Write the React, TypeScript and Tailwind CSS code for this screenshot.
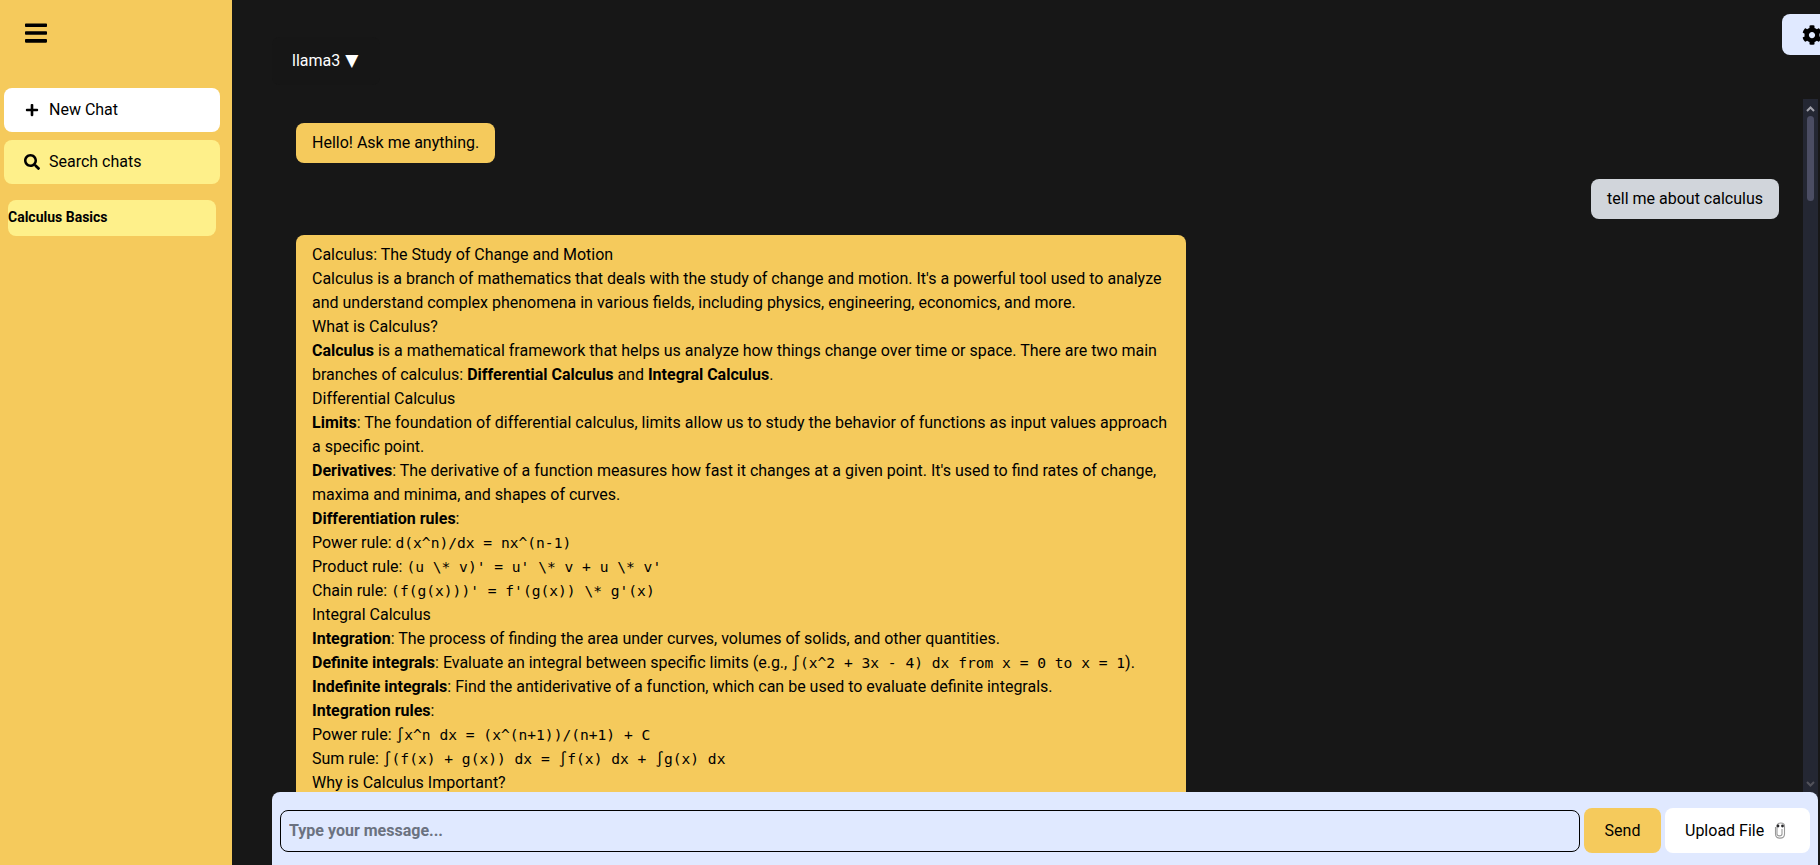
import React from 'react';
import { FaBars, FaCog, FaPlus, FaSearch } from 'react-icons/fa';

const Code = ({ children }: { children: React.ReactNode }) => (
  <code className="font-['DejaVu_Sans_Mono',monospace] text-[14.6px]">{children}</code>
);

const Clip = () => (
  <svg width="12" height="17" viewBox="0 0 12 17" fill="none" className="ml-[10px]">
    <path d="M1.500 5v7c0 5.500 9 5.500 9 0V4C10.500 0 3 0 3 4v8c0 2.500 5 2.500 5 0V7" stroke="#9a9a9a" strokeWidth="1.100" />
    <circle cx="4" cy="4" r="1.400" fill="#27272a" />
    <circle cx="8.500" cy="4" r="1.400" fill="#27272a" />
  </svg>
);

const App: React.FC = () => {
  return (
    <div className="flex h-screen overflow-hidden bg-[#171717] font-['Roboto',sans-serif] text-base text-black">
      {/* Sidebar */}
      <aside className="flex w-[232px] shrink-0 flex-col bg-[#f5ca5c] pl-1 pr-3">
        <div className="h-[88px] pl-[21px] pt-[18px]">
          <FaBars className="h-[30px] w-[22px]" />
        </div>
        <button className="flex h-11 items-center gap-[10px] rounded-lg bg-white pl-[21px]">
          <FaPlus className="h-[14px] w-[14px]" />
          New Chat
        </button>
        <button className="mt-2 flex h-11 items-center gap-[9px] rounded-lg bg-[#fef08a] pl-5">
          <FaSearch className="h-4 w-4" />
          Search chats
        </button>
        <div className="mx-1 mt-4 h-9 rounded-lg bg-[#fef08a] pt-[9px] text-sm leading-4 font-bold">Calculus Basics</div>
      </aside>

      {/* Main */}
      <main className="relative flex min-w-0 flex-1 flex-col">
        <div className="h-[99px] shrink-0 pl-10 pt-[37px]">
          <div className="flex h-[48px] w-[108px] items-center rounded-lg bg-[#161616] pl-[20px] text-white">
            llama3
            <span className="mb-[2px] ml-[5px] font-['DejaVu_Sans',sans-serif] text-[17px] leading-6">▼</span>
          </div>
        </div>
        <button className="absolute left-[1550px] top-[14px] h-[41px] w-[60px] rounded-l-lg bg-[#e0e9ff] pl-5">
          <FaCog className="h-5 w-5" />
        </button>

        <div className="flex min-h-0 flex-1">
          <div className="flex min-w-0 flex-1 flex-col items-start gap-4 overflow-hidden pl-16 pr-6 pt-6">
            <div className="rounded-lg bg-[#f5ca5c] px-4 py-2">Hello! Ask me anything.</div>
            <div className="self-end rounded-lg bg-[#d1d5db] px-4 py-2">tell me about calculus</div>
            <div className="w-[890px] shrink-0 rounded-lg bg-[#f5ca5c] px-4 py-2">
              <p>Calculus: The Study of Change and Motion</p>
              <p>Calculus is a branch of mathematics that deals with the study of change and motion. It's a powerful tool used to analyze and understand complex phenomena in various fields, including physics, engineering, economics, and more.</p>
              <p>What is Calculus?</p>
              <p><b>Calculus</b> is a mathematical framework that helps us analyze how things change over time or space. There are two main branches of calculus: <b>Differential Calculus</b> and <b>Integral Calculus</b>.</p>
              <p>Differential Calculus</p>
              <p><b>Limits</b>: The foundation of differential calculus, limits allow us to study the behavior of functions as input values approach a specific point.</p>
              <p><b>Derivatives</b>: The derivative of a function measures how fast it changes at a given point. It's used to find rates of change, maxima and minima, and shapes of curves.</p>
              <p><b>Differentiation rules</b>:</p>
              <p>Power rule: <Code>d(x^n)/dx = nx^(n-1)</Code></p>
              <p>Product rule: <Code>(u \* v)' = u' \* v + u \* v'</Code></p>
              <p>Chain rule: <Code>(f(g(x)))' = f'(g(x)) \* g'(x)</Code></p>
              <p>Integral Calculus</p>
              <p><b>Integration</b>: The process of finding the area under curves, volumes of solids, and other quantities.</p>
              <p><b>Definite integrals</b>: Evaluate an integral between specific limits (e.g., <Code>∫(x^2 + 3x - 4) dx from x = 0 to x = 1</Code>).</p>
              <p><b>Indefinite integrals</b>: Find the antiderivative of a function, which can be used to evaluate definite integrals.</p>
              <p><b>Integration rules</b>:</p>
              <p>Power rule: <Code>∫x^n dx = (x^(n+1))/(n+1) + C</Code></p>
              <p>Sum rule: <Code>∫(f(x) + g(x)) dx = ∫f(x) dx + ∫g(x) dx</Code></p>
              <p>Why is Calculus Important?</p>
            </div>
          </div>

          {/* Scrollbar */}
          <div className="mr-[2px] flex w-[15px] shrink-0 flex-col items-center bg-[#242733] pt-[3px]">
            <svg width="9" height="6" viewBox="0 0 9 6" className="mb-1 mt-1 shrink-0">
              <path d="M1 5l3.5-3.5L8 5" fill="none" stroke="#a1a1aa" strokeWidth="2" />
            </svg>
            <div className="h-[85px] w-[7px] rounded bg-[#4b4d63]" />
            <svg width="9" height="6" viewBox="0 0 9 6" className="mt-auto mb-[78px] shrink-0">
              <path d="M1 1l3.5 3.5L8 1" fill="none" stroke="#52525b" strokeWidth="2" />
            </svg>
          </div>
        </div>

        {/* Composer */}
        <div className="absolute bottom-0 left-10 flex h-[73px] w-[1546px] items-center gap-1 rounded-t-lg bg-[#e0e9ff] px-2 pt-1">
          <input
            placeholder="Type your message..."
            className="h-[42px] w-[1300px] rounded-lg border border-black bg-transparent px-2 font-bold placeholder:text-[#6b7280]"
          />
          <button className="h-[45px] w-[77px] rounded-lg bg-[#f5ca5c]">Send</button>
          <button className="flex h-[45px] w-[145px] items-center rounded-lg bg-white pl-5">
            Upload File
            <Clip />
          </button>
        </div>
      </main>
    </div>
  );
};

export default App;
